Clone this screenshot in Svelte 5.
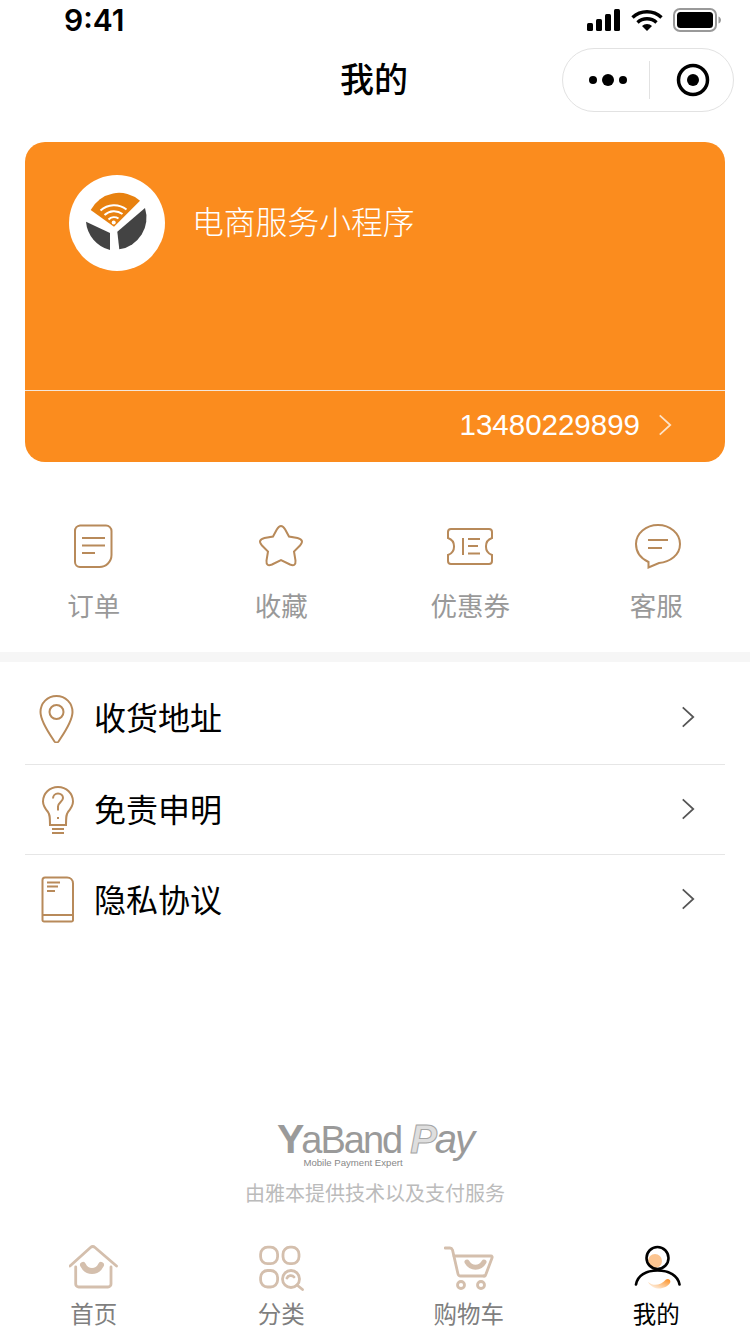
<script>
  const rows = ['收货地址', '免责申明', '隐私协议'];
</script>

{#snippet chevron(cls)}
  <svg class={cls} viewBox="0 0 16 26" fill="none"><path d="M2 2l12 11L2 24" /></svg>
{/snippet}

<div class="page">
  <div class="status">
    <span class="time">9:41</span>
    <div class="status-icons">
      <svg width="34" height="22" viewBox="0 0 34 22" fill="#000">
        <rect x="0" y="14" width="6" height="8" rx="1.5" /><rect x="9" y="10" width="6" height="12" rx="1.5" />
        <rect x="18" y="5" width="6" height="17" rx="1.5" /><rect x="27" y="0" width="6" height="22" rx="1.5" />
      </svg>
      <svg width="32" height="23" viewBox="0 0 32 23" fill="none" stroke="#000" stroke-width="3.4">
        <path d="M1.500 8.500a21 21 0 0 1 29 0" /><path d="M6.500 13.500a14 14 0 0 1 19 0" />
        <path d="M16 22l-5-5a7 7 0 0 1 10 0z" fill="#000" stroke="none" />
      </svg>
      <svg width="48" height="24" viewBox="0 0 48 24" fill="none">
        <rect x="1" y="1" width="42" height="22" rx="6" stroke="#999" stroke-width="2" />
        <rect x="4" y="4" width="36" height="16" rx="3.5" fill="#000" />
        <path d="M45.500 8.500c1.500.5 2.500 2 2.500 3.500s-1 3-2.500 3.500z" fill="#999" />
      </svg>
    </div>
  </div>

  <div class="nav">
    <span class="title">我的</span>
    <div class="capsule">
      <svg width="38" height="14" viewBox="0 0 38 14" fill="#000">
        <circle cx="4" cy="7" r="4" /><circle cx="19" cy="7" r="6" /><circle cx="34" cy="7" r="4" />
      </svg>
      <span class="capsule-line"></span>
      <svg width="34" height="34" viewBox="0 0 34 34">
        <circle cx="17" cy="17" r="14.500" fill="none" stroke="#000" stroke-width="3.500" /><circle cx="17" cy="17" r="6" fill="#000" />
      </svg>
    </div>
  </div>

  <section class="card">
    <div class="card-top">
      <div class="avatar">
        <svg width="96" height="96" viewBox="69 175 96 96">
          <path d="M90.700 210A32 32 0 0 1 140 200.700L114 226.700z" fill="#e8810f" />
          <path d="M86 221.700L110 233V250A32 32 0 0 1 86 221.700z" fill="#434343" />
          <path d="M145 208L117.300 231.700L119.300 249.300A32 32 0 0 0 145 208z" fill="#434343" />
          <g fill="none" stroke="#fff" stroke-width="2">
            <path d="M100.500 210.500a20 20 0 0 1 26 -1" /><path d="M104.500 215a14 14 0 0 1 18 -1" /><path d="M108.500 219.500a8 8 0 0 1 10 -1" />
          </g>
          <circle cx="113.700" cy="222.500" r="2" fill="#fff" />
        </svg>
      </div>
      <span class="shop-name">电商服务小程序</span>
    </div>
    <div class="card-bottom">
      <span class="phone">13480229899</span>
      {@render chevron('card-arrow')}
    </div>
  </section>

  <div class="shortcuts">
    <div class="shortcut">
      <svg width="46" height="46" viewBox="71 523 46 46" fill="none" class="brown">
        <path d="M80 525.500H106a5.500 5.500 0 0 1 5.500 5.500V555a12 12 0 0 1-12 12H80a5 5 0 0 1-5-5V531a5.500 5.500 0 0 1 5-5.500z" />
        <path d="M82 538h23M82 545.500h23M82 553h13" />
      </svg>
      <span>订单</span>
    </div>
    <div class="shortcut">
      <svg width="50" height="46" viewBox="256 523 50 46" fill="none" class="brown">
        <path d="M276.800 529.500Q281 522.500 285.200 529.500L289 536.500L297.500 538Q305 540 300 545.500L294 551.500L295.500 560.500Q296 567 290 564.500L281 560L272 564.500Q266 567 266.500 560.500L268 551.500L262 545.500Q257 540 264.500 538L273 536.500Z" />
      </svg>
      <span>收藏</span>
    </div>
    <div class="shortcut coupon">
      <svg width="48" height="46" viewBox="446 523 48 46" fill="none" class="brown">
        <path d="M451 529H489a3 3 0 0 1 3 3v6a9 9 0 0 0 0 17v6a3 3 0 0 1-3 3H451a3 3 0 0 1-3-3v-6a9 9 0 0 0 0-17v-6a3 3 0 0 1 3-3z" />
        <path d="M463 538v17M468 539h12M468 546h10M468 553.500h12" />
      </svg>
      <span>优惠券</span>
    </div>
    <div class="shortcut">
      <svg width="52" height="46" viewBox="630 523 52 46" fill="none" class="brown">
        <path d="M658 525c12 0 22 8.500 22 19 0 11-10 18-21 19l-10.500 4.500V562C641 558.500 636 552 636 544c0-10.500 10-19 22-19z" />
        <path d="M648 540h20M648 548h14" />
      </svg>
      <span>客服</span>
    </div>
  </div>

  <div class="gap"></div>

  <div class="list">
    {#each rows as label, i}
      <div class="row">
        <div class="row-icon">
          {#if i === 0}
            <svg width="36" height="50" viewBox="38 693 36 50" fill="none" class="brown">
              <path d="M56.500 696c9 0 16 7 16 16 0 9.500-9 22-14 29.500-1 1.300-3 1.300-4 0-5-7.500-14-20-14-29.500 0-9 7-16 16-16z" />
              <circle cx="56.500" cy="712" r="7" />
            </svg>
          {:else if i === 1}
            <svg width="36" height="50" viewBox="38 785 36 50" fill="none" class="brown">
              <path d="M58 787c8.500 0 15 6.500 15 14.500 0 4.500-2.500 7.500-5 10.500-1.500 2-2 3.500-2 13H50c0-9.500-.5-11-2-13-2.500-3-5-6-5-10.500 0-8 6.500-14.500 15-14.500z" />
              <path d="M53 798.500c0-3 2.200-5 5-5s5 2 5 4.500c0 3.500-5 4.500-5 8.500v4" />
              <path d="M58 817v2M52 829h12M52 833h12" />
            </svg>
          {:else}
            <svg width="36" height="50" viewBox="38 875 36 50" fill="none" class="brown">
              <path d="M45 877.500H67c3.500 0 6 2.500 6 6V920a1.500 1.500 0 0 1-1.500 1.500H44a1.500 1.500 0 0 1-1.500-1.500V880a2.500 2.500 0 0 1 2.500-2.500z" />
              <path d="M42.500 915H73M47 882.500h13M47 886.500h11M47 891h8" />
            </svg>
          {/if}
        </div>
        <span class="row-label">{label}</span>
        {@render chevron('row-arrow')}
      </div>
    {/each}
  </div>

  <div class="brand">
    <div class="logo">
      <div class="logo-word"><span class="ya">Y</span><span>aBand</span><span class="pay-p">P</span><span class="pay">ay</span></div>
      <div class="logo-sub">Mobile Payment Expert</div>
    </div>
    <div class="powered">由雅本提供技术以及支付服务</div>
  </div>

  <nav class="tabs">
    <div class="tab">
      <svg width="50" height="46" viewBox="69 1245 50 46" fill="none" class="tan">
        <path d="M70 1266l20.500-18.500c1.500-1.300 3-1.300 4.500 0L116.500 1266" />
        <path d="M75.700 1267v17a3 3 0 0 0 3 3H108a3 3 0 0 0 3-3v-17" />
        <path d="M83 1265c4 8 14 8 18 0" stroke-width="6" />
      </svg>
      <span>首页</span>
    </div>
    <div class="tab">
      <svg width="46" height="46" viewBox="258 1246 46 46" fill="none" class="tan">
        <rect x="260.600" y="1248.200" width="17" height="16.500" rx="7" /><rect x="283" y="1248.200" width="16" height="16.500" rx="7" />
        <rect x="260.600" y="1271.500" width="17" height="16.500" rx="7" /><circle cx="291" cy="1280" r="8.500" />
        <path d="M287 1279c1-2.500 5-3.500 7-1M297 1286l5.500 4.500" />
      </svg>
      <span>分类</span>
    </div>
    <div class="tab">
      <svg width="50" height="46" viewBox="444 1246 50 46" fill="none" class="tan">
        <path d="M445 1249h5c1.500 0 2 .7 2.500 2l5.500 24c.3 1.300 1 2 2.500 2H485" />
        <path d="M454 1257h37c1 0 1.500.8 1 2l-6 16c-.3 1.200-1 2-2 2" />
        <path d="M467 1263c4 7 13 7 17 0" stroke-width="5" />
        <circle cx="461" cy="1286" r="3.500" /><circle cx="481" cy="1286" r="3.500" />
      </svg>
      <span>购物车</span>
    </div>
    <div class="tab active">
      <svg width="50" height="46" viewBox="632 1246 50 46" fill="none">
        <defs>
          <linearGradient id="smile" x1="0" x2="1" y1="1" y2="0">
            <stop offset="0" stop-color="#fff" /><stop offset="1" stop-color="#fb8d1e" />
          </linearGradient>
        </defs>
        <circle cx="656" cy="1262" r="7" fill="#fcc591" />
        <circle cx="658.500" cy="1259" r="11" stroke="#000" stroke-width="2.600" />
        <path d="M637 1285.500c1.500-9 10-14 21.500-14s20.500 5 22 14" stroke="#000" stroke-width="2.600" stroke-linecap="round" />
        <path d="M649 1283C655 1288 662 1286 667 1280.500C669 1279 672.500 1280.500 671 1284C667 1290 655 1293 649 1283z" fill="url(#smile)" />
      </svg>
      <span>我的</span>
    </div>
  </nav>
</div>

<style>
  :global(body) {
    background: #fff;
  }

  .page {
    width: 750px;
    height: 1334px;
    display: flex;
    flex-direction: column;
    overflow: hidden;
    font-family: "Liberation Sans", "Noto Sans CJK SC", sans-serif;
    color: #000;
  }

  .status {
    height: 40px;
    display: flex;
    align-items: center;
    justify-content: space-between;
    padding: 0 29px 0 64px;
  }

  .time {
    font-family: Inter, "Liberation Sans", sans-serif;
    font-size: 30px;
    font-weight: 600;
  }

  .status-icons {
    display: flex;
    align-items: center;
    gap: 10px;
  }

  .nav {
    height: 80px;
    display: flex;
    align-items: center;
    justify-content: center;
    position: relative;
  }

  .title {
    font-size: 34px;
    font-weight: 500;
    margin: 0 2px 6px 0;
  }

  .capsule {
    position: absolute;
    left: 562px;
    top: 8px;
    width: 172px;
    height: 64px;
    box-sizing: border-box;
    border: 1px solid #e2e2e2;
    border-radius: 32px;
    display: flex;
    align-items: center;
    padding-left: 26px;
  }

  .capsule-line {
    width: 1px;
    height: 38px;
    background: #e2e2e2;
    margin: 0 26px 0 22px;
  }

  .card {
    margin: 22px 25px 0;
    height: 320px;
    border-radius: 20px;
    background: #fb8c1e;
    color: #fff;
    display: flex;
    flex-direction: column;
  }

  .card-top {
    height: 249px;
    box-sizing: border-box;
    border-bottom: 1px solid #f3e6da;
    padding: 33px 44px 0;
    display: flex;
    align-items: flex-start;
    gap: 27px;
  }

  .avatar {
    width: 96px;
    height: 96px;
    border-radius: 50%;
    background: #fff;
    flex-shrink: 0;
  }

  .avatar svg {
    display: block;
  }

  .shop-name {
    font-size: 31.800px;
    font-weight: 300;
    line-height: 96px;
  }

  .card-bottom {
    flex: 1;
    display: flex;
    align-items: center;
    justify-content: flex-end;
    padding: 0 53px 4px 0;
    gap: 18px;
  }

  .phone {
    font-size: 29.500px;
  }

  .card-arrow {
    width: 14px;
    height: 24px;
    stroke: #fde3c8;
    stroke-width: 2;
  }

  .row-arrow {
    width: 14px;
    height: 24px;
    stroke: #555;
    stroke-width: 2;
    margin: 0 30px 2px auto;
  }

  .shortcuts {
    margin-top: 61px;
    height: 129px;
    display: grid;
    grid-template-columns: repeat(4, 1fr);
  }

  .shortcut {
    display: flex;
    flex-direction: column;
    align-items: center;
    gap: 20px;
    font-size: 26.500px;
    line-height: 36px;
    color: #999;
  }

  .coupon {
    padding-left: 3px;
  }

  .brown {
    stroke: #b88a5a;
    stroke-width: 2;
  }

  .tan {
    stroke: #d4bfad;
    stroke-width: 2.800;
    stroke-linecap: round;
  }

  .gap {
    height: 10px;
    background: #f6f6f6;
  }

  .list {
    margin: 0 25px;
  }

  .row {
    height: 90px;
    display: flex;
    align-items: center;
    border-bottom: 1px solid #e6e6e6;
    box-sizing: border-box;
  }

  .row:first-child {
    height: 103px;
    padding-top: 10px;
  }

  .row:last-child {
    border-bottom: none;
  }

  .row-icon {
    width: 69px;
    padding-left: 13px;
    box-sizing: border-box;
    display: flex;
    flex-shrink: 0;
  }

  .row-label {
    font-size: 32px;
    margin-bottom: 4px;
  }

  .brand {
    margin-top: auto;
    display: flex;
    flex-direction: column;
    align-items: center;
  }

  .logo {
    display: flex;
    flex-direction: column;
    align-items: center;
    color: #9a9a9a;
  }

  .logo-word {
    display: flex;
    align-items: baseline;
    font-size: 38px;
    line-height: 34px;
    letter-spacing: -2px;
    white-space: nowrap;
  }

  .ya {
    font-size: 41px;
    font-weight: 700;
    margin-right: -1px;
  }

  .pay-p {
    margin-left: 9px;
    font-size: 40px;
    font-style: italic;
    font-weight: 700;
    color: #dedede;
    -webkit-text-stroke: 1px #a5a5a5;
  }

  .pay {
    font-size: 40px;
    font-style: italic;
  }

  .logo-sub {
    font-size: 9.600px;
    line-height: 12px;
    margin: 0 44px 0 0;
    color: #888;
  }

  .powered {
    margin-top: 11px;
    font-size: 20px;
    line-height: 28px;
    color: #bbb;
  }

  .tabs {
    margin-top: 37px;
    height: 89px;
    display: grid;
    grid-template-columns: repeat(4, 1fr);
  }

  .tab {
    display: flex;
    flex-direction: column;
    align-items: center;
    font-size: 23.500px;
    line-height: 30px;
    color: #7f7f7f;
    gap: 9px;
  }

  .tab svg {
    flex-shrink: 0;
  }

  .tab.active {
    color: #000;
  }
</style>
